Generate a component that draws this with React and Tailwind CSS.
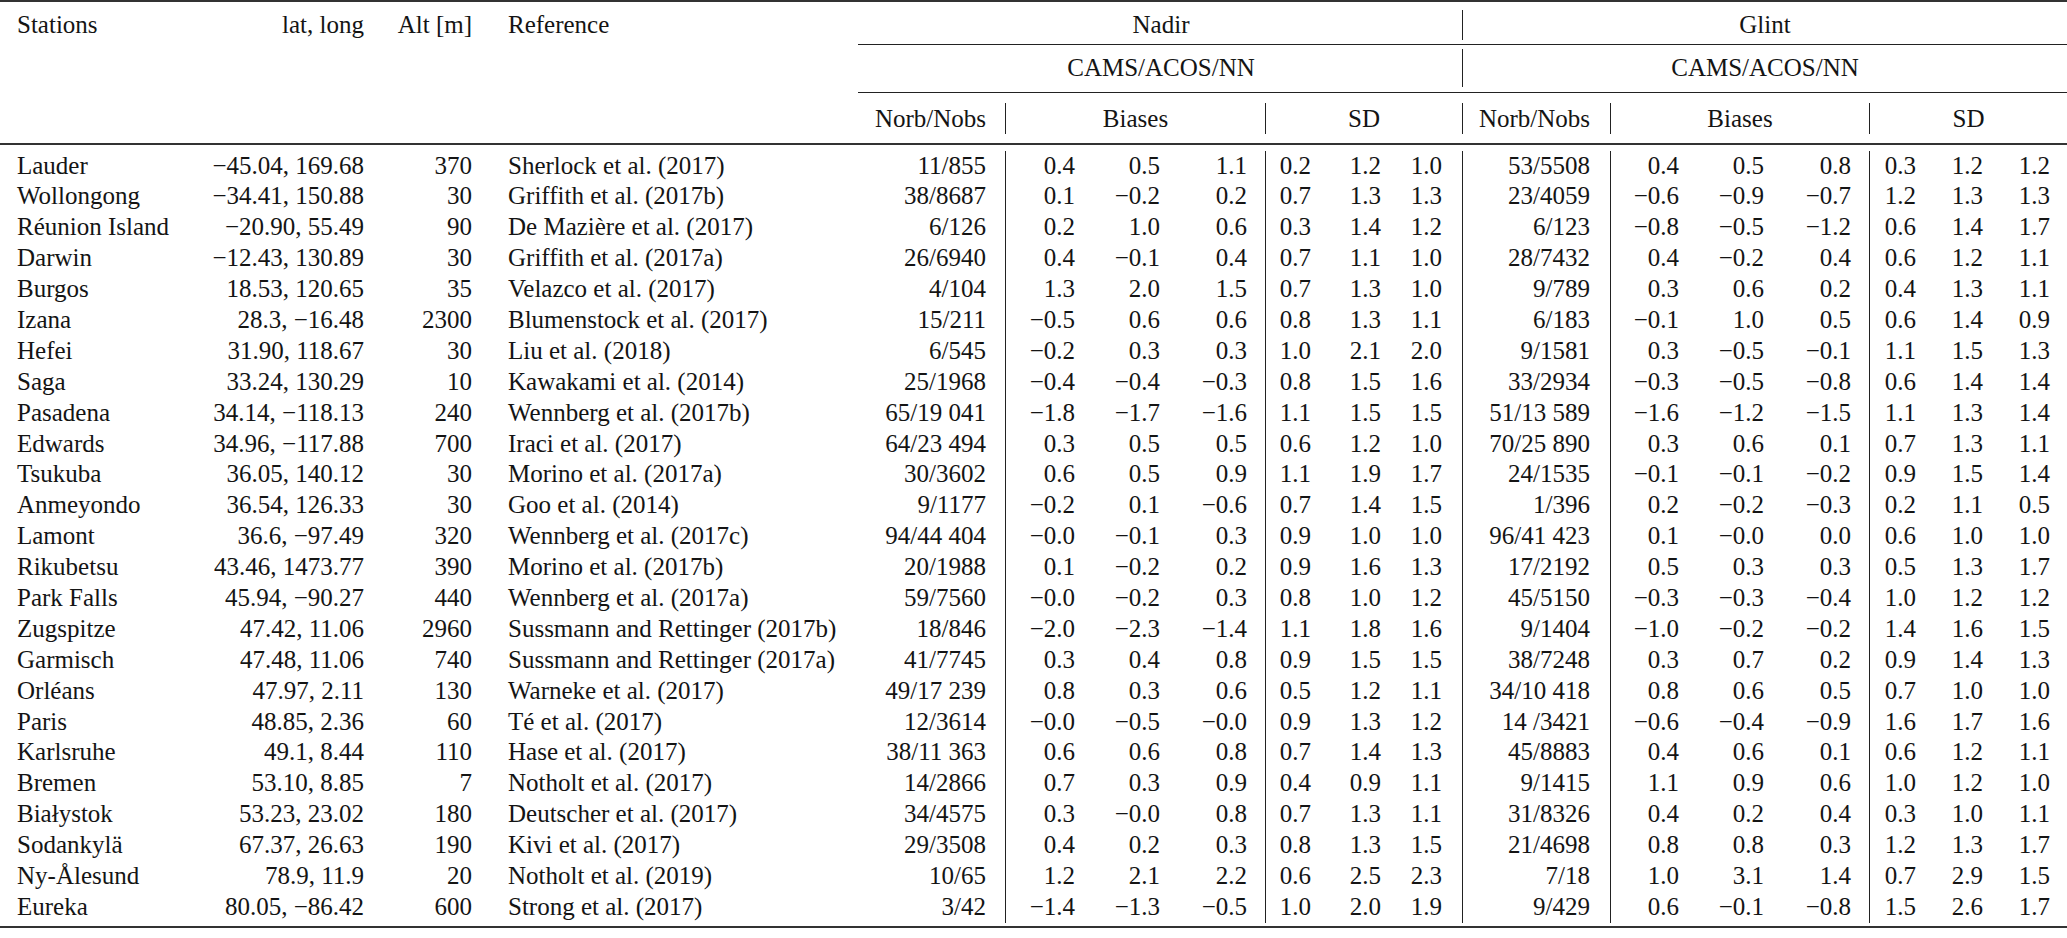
const cols =
  "grid grid-cols-[200px_164px_108px_388px_145px_70px_85px_105px_46px_70px_81px_148px_69px_85px_105px_47px_67px_84px]"

const rows = [
  ["Lauder", "−45.04, 169.68", "370", "Sherlock et al. (2017)", "11/855", "0.4", "0.5", "1.1", "0.2", "1.2", "1.0", "53/5508", "0.4", "0.5", "0.8", "0.3", "1.2", "1.2"],
  ["Wollongong", "−34.41, 150.88", "30", "Griffith et al. (2017b)", "38/8687", "0.1", "−0.2", "0.2", "0.7", "1.3", "1.3", "23/4059", "−0.6", "−0.9", "−0.7", "1.2", "1.3", "1.3"],
  ["Réunion Island", "−20.90, 55.49", "90", "De Mazière et al. (2017)", "6/126", "0.2", "1.0", "0.6", "0.3", "1.4", "1.2", "6/123", "−0.8", "−0.5", "−1.2", "0.6", "1.4", "1.7"],
  ["Darwin", "−12.43, 130.89", "30", "Griffith et al. (2017a)", "26/6940", "0.4", "−0.1", "0.4", "0.7", "1.1", "1.0", "28/7432", "0.4", "−0.2", "0.4", "0.6", "1.2", "1.1"],
  ["Burgos", "18.53, 120.65", "35", "Velazco et al. (2017)", "4/104", "1.3", "2.0", "1.5", "0.7", "1.3", "1.0", "9/789", "0.3", "0.6", "0.2", "0.4", "1.3", "1.1"],
  ["Izana", "28.3, −16.48", "2300", "Blumenstock et al. (2017)", "15/211", "−0.5", "0.6", "0.6", "0.8", "1.3", "1.1", "6/183", "−0.1", "1.0", "0.5", "0.6", "1.4", "0.9"],
  ["Hefei", "31.90, 118.67", "30", "Liu et al. (2018)", "6/545", "−0.2", "0.3", "0.3", "1.0", "2.1", "2.0", "9/1581", "0.3", "−0.5", "−0.1", "1.1", "1.5", "1.3"],
  ["Saga", "33.24, 130.29", "10", "Kawakami et al. (2014)", "25/1968", "−0.4", "−0.4", "−0.3", "0.8", "1.5", "1.6", "33/2934", "−0.3", "−0.5", "−0.8", "0.6", "1.4", "1.4"],
  ["Pasadena", "34.14, −118.13", "240", "Wennberg et al. (2017b)", "65/19 041", "−1.8", "−1.7", "−1.6", "1.1", "1.5", "1.5", "51/13 589", "−1.6", "−1.2", "−1.5", "1.1", "1.3", "1.4"],
  ["Edwards", "34.96, −117.88", "700", "Iraci et al. (2017)", "64/23 494", "0.3", "0.5", "0.5", "0.6", "1.2", "1.0", "70/25 890", "0.3", "0.6", "0.1", "0.7", "1.3", "1.1"],
  ["Tsukuba", "36.05, 140.12", "30", "Morino et al. (2017a)", "30/3602", "0.6", "0.5", "0.9", "1.1", "1.9", "1.7", "24/1535", "−0.1", "−0.1", "−0.2", "0.9", "1.5", "1.4"],
  ["Anmeyondo", "36.54, 126.33", "30", "Goo et al. (2014)", "9/1177", "−0.2", "0.1", "−0.6", "0.7", "1.4", "1.5", "1/396", "0.2", "−0.2", "−0.3", "0.2", "1.1", "0.5"],
  ["Lamont", "36.6, −97.49", "320", "Wennberg et al. (2017c)", "94/44 404", "−0.0", "−0.1", "0.3", "0.9", "1.0", "1.0", "96/41 423", "0.1", "−0.0", "0.0", "0.6", "1.0", "1.0"],
  ["Rikubetsu", "43.46, 1473.77", "390", "Morino et al. (2017b)", "20/1988", "0.1", "−0.2", "0.2", "0.9", "1.6", "1.3", "17/2192", "0.5", "0.3", "0.3", "0.5", "1.3", "1.7"],
  ["Park Falls", "45.94, −90.27", "440", "Wennberg et al. (2017a)", "59/7560", "−0.0", "−0.2", "0.3", "0.8", "1.0", "1.2", "45/5150", "−0.3", "−0.3", "−0.4", "1.0", "1.2", "1.2"],
  ["Zugspitze", "47.42, 11.06", "2960", "Sussmann and Rettinger (2017b)", "18/846", "−2.0", "−2.3", "−1.4", "1.1", "1.8", "1.6", "9/1404", "−1.0", "−0.2", "−0.2", "1.4", "1.6", "1.5"],
  ["Garmisch", "47.48, 11.06", "740", "Sussmann and Rettinger (2017a)", "41/7745", "0.3", "0.4", "0.8", "0.9", "1.5", "1.5", "38/7248", "0.3", "0.7", "0.2", "0.9", "1.4", "1.3"],
  ["Orléans", "47.97, 2.11", "130", "Warneke et al. (2017)", "49/17 239", "0.8", "0.3", "0.6", "0.5", "1.2", "1.1", "34/10 418", "0.8", "0.6", "0.5", "0.7", "1.0", "1.0"],
  ["Paris", "48.85, 2.36", "60", "Té et al. (2017)", "12/3614", "−0.0", "−0.5", "−0.0", "0.9", "1.3", "1.2", "14 /3421", "−0.6", "−0.4", "−0.9", "1.6", "1.7", "1.6"],
  ["Karlsruhe", "49.1, 8.44", "110", "Hase et al. (2017)", "38/11 363", "0.6", "0.6", "0.8", "0.7", "1.4", "1.3", "45/8883", "0.4", "0.6", "0.1", "0.6", "1.2", "1.1"],
  ["Bremen", "53.10, 8.85", "7", "Notholt et al. (2017)", "14/2866", "0.7", "0.3", "0.9", "0.4", "0.9", "1.1", "9/1415", "1.1", "0.9", "0.6", "1.0", "1.2", "1.0"],
  ["Białystok", "53.23, 23.02", "180", "Deutscher et al. (2017)", "34/4575", "0.3", "−0.0", "0.8", "0.7", "1.3", "1.1", "31/8326", "0.4", "0.2", "0.4", "0.3", "1.0", "1.1"],
  ["Sodankylä", "67.37, 26.63", "190", "Kivi et al. (2017)", "29/3508", "0.4", "0.2", "0.3", "0.8", "1.3", "1.5", "21/4698", "0.8", "0.8", "0.3", "1.2", "1.3", "1.7"],
  ["Ny-Ålesund", "78.9, 11.9", "20", "Notholt et al. (2019)", "10/65", "1.2", "2.1", "2.2", "0.6", "2.5", "2.3", "7/18", "1.0", "3.1", "1.4", "0.7", "2.9", "1.5"],
  ["Eureka", "80.05, −86.42", "600", "Strong et al. (2017)", "3/42", "−1.4", "−1.3", "−0.5", "1.0", "2.0", "1.9", "9/429", "0.6", "−0.1", "−0.8", "1.5", "2.6", "1.7"],
]

// per-column cell classes for the body
const cellCls = [
  "pl-[17px] text-left",
  "text-right",
  "text-right",
  "pl-[36px] text-left",
  "text-right pr-[19px]",
  "text-right border-l border-[#222]",
  "text-right",
  "text-right pr-[18px]",
  "text-right border-l border-[#222]",
  "text-right",
  "text-right pr-[20px]",
  "text-right pr-[20px] border-l border-[#222]",
  "text-right border-l border-[#222]",
  "text-right",
  "text-right pr-[18px]",
  "text-right border-l border-[#222]",
  "text-right",
  "text-right pr-[17px]",
]

const Row = ({ r }) => (
  <div className={`${cols} h-[30.9px] leading-[30.9px]`}>
    {r.map((v, i) => (
      <div key={i} className={`${cellCls[i]} whitespace-nowrap`}>
        {v}
      </div>
    ))}
  </div>
)

export default function App() {
  return (
    <div className="w-[2067px] h-[938px] bg-white text-[#141414] text-[25px] overflow-hidden font-['Liberation_Serif','Times_New_Roman',serif]">
      <div className="h-[2px] bg-[#333]" />

      {/* header row 1 */}
      <div className={`${cols} pt-[8px] pb-[4px]`}>
        <div className="pl-[17px] leading-[30px]">Stations</div>
        <div className="text-right leading-[30px]">lat, long</div>
        <div className="text-right leading-[30px]">Alt [m]</div>
        <div className="pl-[36px] leading-[30px]">Reference</div>
        <div className="col-span-7 text-center leading-[30px]">Nadir</div>
        <div className="col-span-7 text-center leading-[30px] border-l border-[#222]">Glint</div>
      </div>
      <div className="h-px bg-[#222] ml-[858px]" />

      {/* header row 2 */}
      <div className={`${cols} pt-[4px] pb-[5px]`}>
        <div className="col-span-4" />
        <div className="col-span-7 text-center leading-[38px]">CAMS/ACOS/NN</div>
        <div className="col-span-7 text-center leading-[38px] border-l border-[#222]">CAMS/ACOS/NN</div>
      </div>
      <div className="h-px bg-[#222] ml-[858px]" />

      {/* header row 3 */}
      <div className={`${cols} pt-[10px] pb-[9px]`}>
        <div className="col-span-4" />
        <div className="text-right pr-[19px] leading-[31px]">Norb/Nobs</div>
        <div className="col-span-3 text-center leading-[31px] border-l border-[#222]">Biases</div>
        <div className="col-span-3 text-center leading-[31px] border-l border-[#222]">SD</div>
        <div className="text-right pr-[20px] leading-[31px] border-l border-[#222]">Norb/Nobs</div>
        <div className="col-span-3 text-center leading-[31px] border-l border-[#222]">Biases</div>
        <div className="col-span-3 text-center leading-[31px] border-l border-[#222]">SD</div>
      </div>
      <div className="h-[1.5px] bg-[#333]" />

      {/* body */}
      <div className="pt-[6px] pb-[3px]">
        {rows.map((r) => (
          <Row key={r[0]} r={r} />
        ))}
      </div>
      <div className="h-[2px] bg-[#333]" />
    </div>
  )
}
